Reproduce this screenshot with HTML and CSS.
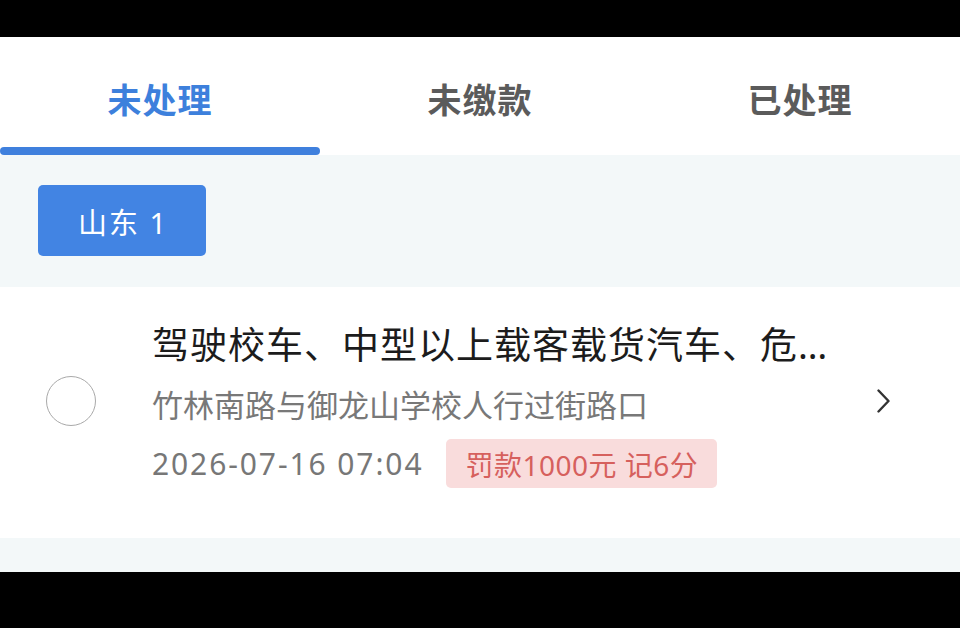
FILE: index.html
```html
<!DOCTYPE html>
<html lang="zh-CN">
<head>
<meta charset="utf-8">
<title>违章查询</title>
<link rel="stylesheet" href="styles.css">
</head>
<body>
<div class="screen">
  <div class="bezel bezel-top"></div>
  <main class="app">
    <nav class="tabs">
      <div class="tab is-active"><span class="tab-label">未处理</span><span class="tab-bar"></span></div>
      <div class="tab"><span class="tab-label">未缴款</span><span class="tab-bar"></span></div>
      <div class="tab"><span class="tab-label">已处理</span><span class="tab-bar"></span></div>
    </nav>
    <section class="filters">
      <button class="chip">山东 1</button>
    </section>
    <article class="record">
      <span class="check"></span>
      <div class="record-body">
        <div class="record-title">驾驶校车、中型以上载客载货汽车、危险物品运输车辆以外的机动车超过规定时速50%以上的</div>
        <div class="record-place">竹林南路与御龙山学校人行过街路口</div>
        <div class="record-meta">
          <span class="record-time">2026-07-16 07:04</span>
          <span class="penalty">罚款1000元 记6分</span>
        </div>
      </div>
      <svg class="chevron" width="16" height="24" viewBox="0 0 16 24" aria-hidden="true">
        <path d="M2.5 1.5 L12.5 12 L2.5 22.5" fill="none" stroke="#333" stroke-width="2.4" stroke-linecap="round" stroke-linejoin="round"/>
      </svg>
    </article>
    <div class="list-end"></div>
  </main>
  <div class="bezel bezel-bottom"></div>
</div>
</body>
</html>
```
FILE: styles.css
```css
* { box-sizing: border-box; }

html, body {
  margin: 0;
  padding: 0;
  background: #000;
}

body {
  font-family: "Noto Sans", "Noto Sans CJK SC", sans-serif;
  width: 960px;
  height: 628px;
  overflow: hidden;
}

.screen {
  display: flex;
  flex-direction: column;
  height: 628px;
}

.bezel { background: #000; }
.bezel-top { height: 37px; }
.bezel-bottom { flex: 1; }

.app {
  height: 535px;
  display: flex;
  flex-direction: column;
  background: #f3f8f9;
}

/* tab strip */
.tabs {
  display: flex;
  height: 118px;
  background: #fff;
}

.tab {
  flex: 1;
  display: flex;
  flex-direction: column;
  align-items: center;
  padding-top: 43px;
}

.tab-label {
  font-size: 34px;
  line-height: 40px;
  font-weight: 700;
  color: #5b5b5b;
  letter-spacing: 1px;
}

.tab-bar {
  align-self: stretch;
  height: 8px;
  margin-top: 27px;
  border-radius: 4px;
  background: transparent;
}

.tab.is-active .tab-label { color: #3d80dc; }
.tab.is-active .tab-bar { background: #3f80dd; }

/* plate filter */
.filters {
  padding: 30px 38px 31px;
}

.chip {
  width: 168px;
  height: 71px;
  border: 0;
  border-radius: 5px;
  background: #4284e3;
  color: #fff;
  font-family: inherit;
  font-size: 29px;
  font-weight: 400;
  letter-spacing: 2px;
  padding: 0 0 0 2px;
}

/* violation record */
.record {
  height: 251px;
  background: #fff;
  display: flex;
  align-items: center;
  padding: 36px 0 50px;
}

.check {
  width: 50px;
  height: 50px;
  border: 1.5px solid #a9a9a9;
  border-radius: 50%;
  margin: 0 0 9px 46px;
  flex: none;
}

.record-body {
  flex: 1;
  margin-left: 56px;
  min-width: 0;
}

.record-title {
  max-width: 684px;
  font-size: 37px;
  line-height: 44px;
  letter-spacing: 1px;
  color: #1c1c1c;
  white-space: nowrap;
  overflow: hidden;
  text-overflow: ellipsis;
}

.record-place {
  margin-top: 16px;
  font-size: 31px;
  line-height: 44px;
  color: #787878;
}

.record-meta {
  margin-top: 12px;
  display: flex;
  align-items: center;
  gap: 23px;
}

.record-time {
  font-size: 30px;
  color: #777;
  letter-spacing: 1.9px;
}

.penalty {
  height: 49px;
  display: inline-flex;
  align-items: center;
  padding: 0 19px;
  border-radius: 5px;
  background: #f9dcdc;
  color: #d6605d;
  font-size: 28px;
  letter-spacing: 0.5px;
}

.chevron {
  flex: none;
  margin: 0 68px 9px 20px;
}

.list-end {
  flex: 1;
}
```
